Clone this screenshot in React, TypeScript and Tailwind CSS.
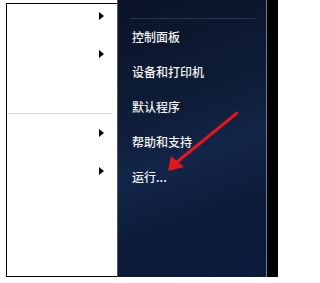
const rightItems = ["控制面板", "设备和打印机", "默认程序", "帮助和支持", "运行..."];

function Caret() {
  return (
    <svg width="5" height="8" viewBox="0 0 5 8" className="block">
      <path d="M0 0 L5 4 L0 8 Z" fill="#000" />
    </svg>
  );
}

export default function App() {
  return (
    <div className="relative w-[278px] h-[283px] bg-white overflow-hidden font-['Noto_Sans_CJK_SC',sans-serif]">
      <div className="flex h-[277px] pl-[6px]">
        {/* left white pane */}
        <div className="mt-[3px] w-[111px] border-l border-t border-b border-black bg-white flex flex-col">
          <div className="h-[24px] flex items-center justify-end pr-[13px]">
            <Caret />
          </div>
          <div className="mt-[14px] h-[24px] flex items-center justify-end pr-[13px]">
            <Caret />
          </div>
          <div className="mt-[47px] h-px bg-[#d9d9d9] ml-px mr-[5px]" />
          <div className="mt-[7px] h-[24px] flex items-center justify-end pr-[13px]">
            <Caret />
          </div>
          <div className="mt-[14px] h-[24px] flex items-center justify-end pr-[13px]">
            <Caret />
          </div>
        </div>

        {/* dark pane */}
        <div className="w-[150px] border-l border-r border-l-[#4d5769] border-r-[#6f7d92] bg-[linear-gradient(160deg,#0a1327_0%,#0f1d38_40%,#13264a_55%,#0d1b39_75%,#0b1a3b_100%)]">
          <div className="mt-[18px] ml-[12px] mr-[9px] h-px bg-[#26354f]" />
          <div className="pl-[14px] flex flex-col">
            {rightItems.map((t) => (
              <div key={t} className="h-[35px] leading-[35px] text-[12px] font-medium text-[#f2f2f2]">
                {t}
              </div>
            ))}
          </div>
        </div>

        {/* black strip */}
        <div className="flex-1 bg-black" />
      </div>

      {/* red annotation arrow */}
      <svg className="absolute left-0 top-0" width="278" height="283">
        <line x1="237" y1="113" x2="177" y2="162" stroke="#e3161e" strokeWidth="3" strokeLinecap="round" />
        <path d="M168 171 L171 156 L184 167 Z" fill="#e3161e" />
      </svg>
    </div>
  );
}
